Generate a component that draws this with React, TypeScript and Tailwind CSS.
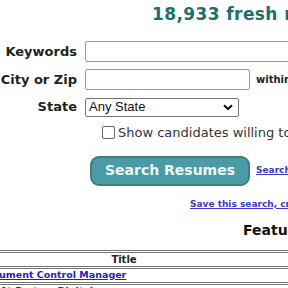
export default function App() {
  return (
    <div className="w-[288px] h-[288px] overflow-hidden bg-white" style={{ fontFamily: '"DejaVu Sans", Verdana, sans-serif' }}>
      <div className="w-[720px]">
        <h1 className="pl-[152px] pt-[4px] text-[17px] leading-[21px] font-bold text-[#1f6e6c] tracking-[0.4px]">
          18,933 fresh resumes
        </h1>

        <div className="mt-[16px] flex flex-col gap-[7px]">
          <div className="flex items-center h-[21px]">
            <label className="w-[77px] text-right text-[13px] font-bold text-[#222]">Keywords</label>
            <input className="ml-[8px] w-[300px] h-[21px] border border-[#999] rounded-[2px]" />
          </div>
          <div className="flex items-center h-[21px]">
            <label className="w-[77px] text-right text-[13px] font-bold text-[#222]">City or Zip</label>
            <input className="ml-[8px] w-[165px] h-[21px] border border-[#999] rounded-[2px]" />
            <span className="ml-[6px] text-[10px] font-bold text-[#222]">within</span>
          </div>
          <div className="flex items-center h-[20px]">
            <label className="w-[77px] text-right text-[13px] font-bold text-[#222]">State</label>
            <div className="ml-[8px] w-[154px] h-[19px] border border-[#777] rounded-[2px] flex items-center justify-between px-[3px]">
              <span className="text-[13px] text-[#111]" style={{ fontFamily: '"Liberation Sans", Arial, sans-serif' }}>Any State</span>
              <svg width="10" height="7" viewBox="0 0 10 7" className="mr-[2px]">
                <path d="M1 1.2 L5 5 L9 1.2" fill="none" stroke="#111" strokeWidth="2" />
              </svg>
            </div>
          </div>
        </div>

        <div className="mt-[6px] flex items-center pl-[102px]">
          <span className="w-[13px] h-[13px] border border-[#666] rounded-[2px] bg-white" />
          <span className="ml-[3px] text-[13px] text-[#333]">Show candidates willing to relocate</span>
        </div>

        <div className="mt-[13px] flex items-center pl-[90px]">
          <button className="w-[160px] h-[30px] rounded-[9px] bg-[#4a9ba6] border-2 border-[#3f7f78] text-[#eef7f7] text-[14px] font-bold">
            Search Resumes
          </button>
          <a className="ml-[6px] text-[9px] font-bold text-[#3a3acc] underline">Search Tips</a>
        </div>

        <div className="mt-[10px] pl-[190px] leading-[12px]">
          <a className="text-[9px] font-bold text-[#3a3acc] underline">Save this search, create an alert</a>
        </div>

        <div className="mt-[12px] pl-[243px] text-[14px] leading-[16px] font-bold text-[#111]">Featured Resumes</div>

        <div className="mt-[12px] border-t-[3px] border-double border-[#777]">
          <div className="h-[13px] flex items-center justify-center w-[248px] text-[10px] font-bold text-[#222]">Title</div>
          <div className="border-t-[3px] border-double border-[#777]" />
          <div className="h-[13px] flex items-center text-[9.5px] font-bold text-[#2222bb] underline -ml-[21px]">Document Control Manager</div>
          <div className="border-t-[3px] border-double border-[#777]" />
          <div className="h-[14px] pt-[0px] text-[9.5px] leading-[12px] font-bold text-[#2222bb]">At Pertom Digital</div>
        </div>
      </div>
    </div>
  );
}
